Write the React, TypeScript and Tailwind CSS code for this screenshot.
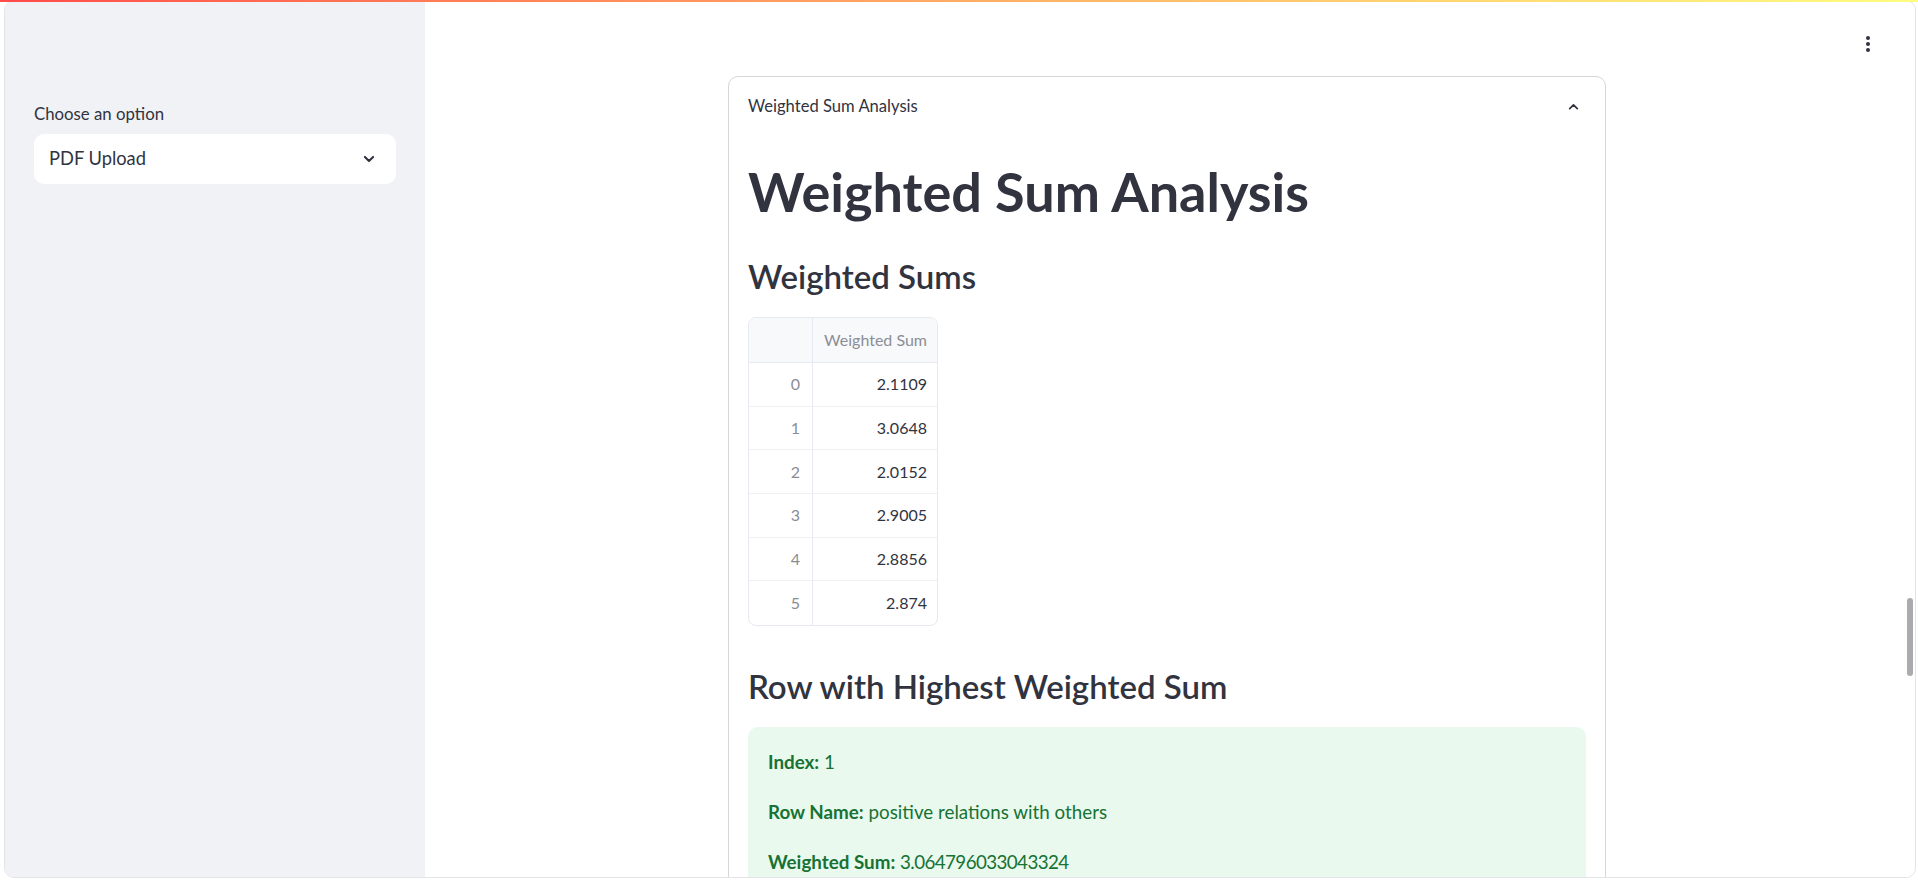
import { useState } from "react";

const rows = [
  { i: 0, v: "2.1109" },
  { i: 1, v: "3.0648" },
  { i: 2, v: "2.0152" },
  { i: 3, v: "2.9005" },
  { i: 4, v: "2.8856" },
  { i: 5, v: "2.874" },
];

function ChevronDown() {
  return (
    <svg width="14" height="14" viewBox="0 0 24 24" fill="none" stroke="#31333f" strokeWidth="3.6" strokeLinecap="round" strokeLinejoin="round">
      <path d="M5 8.5l7 7 7-7" />
    </svg>
  );
}

function ChevronUp() {
  return (
    <svg width="13" height="13" viewBox="0 0 24 24" fill="none" stroke="#31333f" strokeWidth="3.2" strokeLinecap="round" strokeLinejoin="round">
      <path d="M5 16l7-7 7 7" />
    </svg>
  );
}

function Kebab() {
  return (
    <div className="flex flex-col items-center gap-[2px]">
      <span className="block w-[4px] h-[4px] rounded-full bg-[#31333f]" />
      <span className="block w-[4px] h-[4px] rounded-full bg-[#31333f]" />
      <span className="block w-[4px] h-[4px] rounded-full bg-[#31333f]" />
    </div>
  );
}

export default function App() {
  const [open] = useState(true);

  return (
    <div className="relative h-[881px] w-full bg-white overflow-hidden font-['Lato','Liberation_Sans',sans-serif] text-[#31333f]">
      {/* top decoration line */}
      <div className="absolute top-0 left-0 right-0 h-[2px] z-10 bg-gradient-to-r from-[#ff4b4b] to-[#fffd80]" />

      <div className="ml-[4px] w-[1912px] h-[878px] border border-[#e4e4e6] rounded-[10px] overflow-hidden flex">
        {/* sidebar */}
        <aside className="w-[420px] shrink-0 bg-[#f0f2f6] px-[29px] pt-[102px]">
          <label className="block text-[16.8px] leading-[22px] text-[#31333f]">Choose an option</label>
          <div className="mt-[9px] h-[50px] rounded-[10px] bg-white flex items-center justify-between pl-[15px] pr-[20px]">
            <span className="text-[18.3px] text-[#31333f]">PDF Upload</span>
            <ChevronDown />
          </div>
        </aside>

        {/* main */}
        <main className="relative flex-1 bg-white">
          <button className="absolute top-[33px] right-[43px] p-[2px]">
            <Kebab />
          </button>
          <div className="absolute right-[2px] top-[597px] w-[6px] h-[78px] rounded-full bg-[#aaaaaf]" />

          <div className="flex justify-center pr-[6px] pt-[75px]">
            <div className="w-[878px] border border-[#d6d6d9] rounded-[10px] min-h-[900px]">
              <div className="h-[58px] flex items-center justify-between pl-[19px] pr-[25px]">
                <span className="text-[16.6px] text-[#31333f]">Weighted Sum Analysis</span>
                <ChevronUp />
              </div>
              {open && (
                <div className="px-[19px] pt-[26px]">
                  <h1 className="text-[54px] leading-[62px] font-bold">Weighted Sum Analysis</h1>
                  <h2 className="mt-[31px] text-[33px] leading-[44px] font-semibold">Weighted Sums</h2>

                  <div className="mt-[19px] w-[190px] border border-[#e6e9ef] rounded-[8px] overflow-hidden text-[16px]">
                    <div className="flex h-[45px] bg-[#f8f9fb] border-b border-[#e6e9ef]">
                      <div className="w-[64px] border-r border-[#e6e9ef]" />
                      <div className="flex-1 flex items-center justify-end pr-[10px] text-[#8b8d96]">Weighted Sum</div>
                    </div>
                    {rows.map((r, k) => (
                      <div key={r.i} className={`flex h-[43.7px] ${k < rows.length - 1 ? "border-b border-[#eef0f4]" : ""}`}>
                        <div className="w-[64px] border-r border-[#e6e9ef] flex items-center justify-end pr-[12px] text-[#8b8d96]">{r.i}</div>
                        <div className="flex-1 flex items-center justify-end pr-[10px] text-[#31333f]">{r.v}</div>
                      </div>
                    ))}
                  </div>

                  <h2 className="mt-[38px] text-[33px] leading-[44px] font-semibold">Row with Highest Weighted Sum</h2>

                  <div className="mt-[19px] rounded-[10px] bg-[#e9f9ee] px-[20px] pt-[20px] pb-[10px] text-[#177233] text-[18.8px] leading-[30px]">
                    <p className="mb-[20px]"><span className="font-bold">Index:</span> 1</p>
                    <p className="mb-[20px]"><span className="font-bold">Row Name:</span> positive relations with others</p>
                    <p className="mb-[20px]"><span className="font-bold">Weighted Sum:</span> <span className="tracking-[-0.6px]">3.064796033043324</span></p>
                  </div>
                </div>
              )}
            </div>
          </div>
        </main>
      </div>
    </div>
  );
}
